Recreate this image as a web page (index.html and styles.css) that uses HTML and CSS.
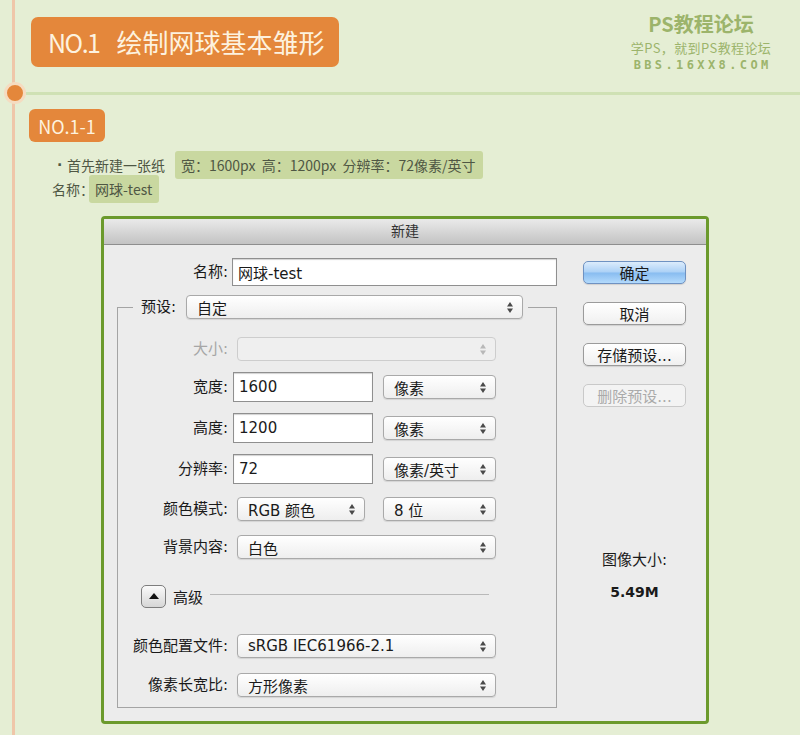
FILE: index.html
```html
<!DOCTYPE html>
<html lang="zh-CN">
<head>
<meta charset="utf-8">
<title>NO.1 绘制网球基本雏形</title>
<link rel="stylesheet" href="styles.css">
</head>
<body>
  <header class="header">
    <h1 class="title"><span class="title-no">NO.1</span><span class="title-cn">绘制网球基本雏形</span></h1>
    <div class="logo">
      <div class="logo-main">PS教程论坛</div>
      <div class="logo-sub">学PS，就到PS教程论坛</div>
      <div class="logo-url">BBS.16XX8.COM</div>
    </div>
  </header>
  <div class="divider"><span class="dot"></span><span class="rule"></span></div>
  <div class="step">NO.1-1</div>
  <p class="line line-1"><span class="bullet">·</span><span>首先新建一张纸</span><span class="hl hl-spec">宽：1600px&nbsp;&nbsp;高：1200px&nbsp;&nbsp;分辨率：72像素/英寸</span></p>
  <p class="line line-2"><span>名称：</span><span class="hl hl-name">网球-test</span></p>

  <div class="dialog">
    <div class="dlg-title">新建</div>
    <div class="dlg-body">
      <div class="dlg-main">
        <div class="row row-name"><span class="lbl">名称:</span><div class="field field-name">网球-test</div></div>
        <div class="group">
          <div class="group-head">
            <span class="seg seg-l"></span>
            <span class="lbl-preset">预设:</span>
            <div class="select select-preset"><span>自定</span><svg class="arr" width="6" height="11" viewBox="0 0 6 11"><path d="M0 4.5L3 0L6 4.5Z M0 6.5L3 11L6 6.5Z" fill="#4a4a4a"/></svg></div>
            <span class="seg seg-r"></span>
          </div>
          <div class="row r1"><span class="lbl lbl-off">大小:</span><div class="select select-wide disabled"><span></span><svg class="arr" width="6" height="11" viewBox="0 0 6 11"><path d="M0 4.5L3 0L6 4.5Z M0 6.5L3 11L6 6.5Z" fill="#b8b8b8"/></svg></div></div>
          <div class="row r2"><span class="lbl">宽度:</span><div class="field field-num">1600</div><div class="select select-unit"><span>像素</span><svg class="arr" width="6" height="11" viewBox="0 0 6 11"><path d="M0 4.5L3 0L6 4.5Z M0 6.5L3 11L6 6.5Z" fill="#4a4a4a"/></svg></div></div>
          <div class="row r3"><span class="lbl">高度:</span><div class="field field-num">1200</div><div class="select select-unit"><span>像素</span><svg class="arr" width="6" height="11" viewBox="0 0 6 11"><path d="M0 4.5L3 0L6 4.5Z M0 6.5L3 11L6 6.5Z" fill="#4a4a4a"/></svg></div></div>
          <div class="row r4"><span class="lbl">分辨率:</span><div class="field field-num">72</div><div class="select select-unit"><span>像素/英寸</span><svg class="arr" width="6" height="11" viewBox="0 0 6 11"><path d="M0 4.5L3 0L6 4.5Z M0 6.5L3 11L6 6.5Z" fill="#4a4a4a"/></svg></div></div>
          <div class="row r5"><span class="lbl">颜色模式:</span><div class="select select-mode"><span>RGB 颜色</span><svg class="arr" width="6" height="11" viewBox="0 0 6 11"><path d="M0 4.5L3 0L6 4.5Z M0 6.5L3 11L6 6.5Z" fill="#4a4a4a"/></svg></div><div class="select select-unit"><span>8 位</span><svg class="arr" width="6" height="11" viewBox="0 0 6 11"><path d="M0 4.5L3 0L6 4.5Z M0 6.5L3 11L6 6.5Z" fill="#4a4a4a"/></svg></div></div>
          <div class="row r6"><span class="lbl">背景内容:</span><div class="select select-wide"><span>白色</span><svg class="arr" width="6" height="11" viewBox="0 0 6 11"><path d="M0 4.5L3 0L6 4.5Z M0 6.5L3 11L6 6.5Z" fill="#4a4a4a"/></svg></div></div>
          <div class="row r7"><div class="toggle"><svg width="10" height="6" viewBox="0 0 10 6"><path d="M0 6L5 0L10 6Z" fill="#111"/></svg></div><span class="adv-lbl">高级</span><span class="adv-line"></span></div>
          <div class="row r8"><span class="lbl">颜色配置文件:</span><div class="select select-wide"><span>sRGB IEC61966-2.1</span><svg class="arr" width="6" height="11" viewBox="0 0 6 11"><path d="M0 4.5L3 0L6 4.5Z M0 6.5L3 11L6 6.5Z" fill="#4a4a4a"/></svg></div></div>
          <div class="row r9"><span class="lbl">像素长宽比:</span><div class="select select-wide"><span>方形像素</span><svg class="arr" width="6" height="11" viewBox="0 0 6 11"><path d="M0 4.5L3 0L6 4.5Z M0 6.5L3 11L6 6.5Z" fill="#4a4a4a"/></svg></div></div>
        </div>
      </div>
      <div class="dlg-side">
        <div class="btn btn-primary">确定</div>
        <div class="btn">取消</div>
        <div class="btn">存储预设...</div>
        <div class="btn btn-disabled">删除预设...</div>
        <div class="size-lbl">图像大小:</div>
        <div class="size-val">5.49M</div>
      </div>
    </div>
  </div>
</body>
</html>
```

FILE: styles.css
```css
* { box-sizing: border-box; }
html, body { margin: 0; padding: 0; }
body {
  width: 800px;
  height: 735px;
  overflow: hidden;
  background: linear-gradient(#efc6a9, #efc6a9) 12px 0 / 3px 100% no-repeat, #e5eed4;
  font-family: "Noto Sans CJK SC", sans-serif;
  color: #4f5744;
}

/* header */
.header {
  height: 82px;
  padding-top: 14px;
  display: flex;
  justify-content: space-between;
  align-items: flex-start;
}
.title {
  margin: 3px 0 0 31px;
  height: 50px;
  padding: 0 15px 0 17px;
  background: #e4873b;
  border-radius: 7px;
  color: #fdf2df;
  font-size: 26px;
  font-weight: 400;
  line-height: 1;
  display: flex;
  align-items: center;
}
.title-no { font-size: 25px; letter-spacing: -1.5px; margin-right: 17px; }
.logo {
  margin-right: 24px;
  width: 150px;
  text-align: center;
  color: #9cb46b;
}
.logo-main { font-size: 20px; line-height: 20px; font-weight: 700; }
.logo-sub { font-size: 13px; line-height: 28px; letter-spacing: 0.4px; }
.logo-url {
  margin-top: -4px;
  font-family: "DejaVu Sans Mono", monospace;
  font-size: 12px;
  line-height: 14px;
  letter-spacing: 3.4px;
  padding-left: 3.4px;
  font-weight: 700;
}

/* divider */
.divider { display: flex; align-items: center; height: 22px; }
.dot {
  flex: none;
  width: 22px;
  height: 22px;
  margin-left: 4px;
  border-radius: 50%;
  background: #e4873b;
  border: 3px solid #f5dcc1;
}
.rule { flex: 1; height: 3px; background: #cfe1b4; }

.step {
  margin: 5px 0 0 29px;
  width: 76px;
  height: 33px;
  border-radius: 6px;
  background: #e4873b;
  color: #fdf2df;
  font-size: 18px;
  display: flex;
  align-items: center;
  justify-content: center;
}

/* text lines */
.line {
  margin: 0;
  height: 24px;
  display: flex;
  align-items: center;
  font-size: 14px;
  white-space: nowrap;
}
.line-1 { margin-top: 11px; padding-left: 57px; }
.line-2 { padding-left: 52px; }
.bullet { flex: none; width: 10px; font-family: "DejaVu Sans", sans-serif; font-weight: 700; }
.hl {
  height: 28px;
  display: flex;
  align-items: center;
  background: #c9d8a0;
  border-radius: 3px;
  padding: 0 7px 0 6px;
}
.hl-spec { margin-left: 10px; }
.hl-name { margin-left: -5px; }

/* dialog */
.dialog {
  margin: 15px 0 0 101px;
  width: 608px;
  height: 508px;
  border: 3px solid #6b9a2c;
  border-radius: 4px;
  background: #ececec;
  display: flex;
  flex-direction: column;
  overflow: hidden;
  font-family: "DejaVu Sans", "Noto Sans CJK SC", sans-serif;
  font-size: 15px;
  color: #1a1a1a;
}
.dlg-title {
  flex: none;
  height: 26px;
  background: linear-gradient(#eaeaea, #c3c3c3);
  border-bottom: 1px solid #8e8e8e;
  text-align: center;
  line-height: 25px;
  font-size: 14px;
  color: #333;
}
.dlg-body { flex: 1; display: flex; padding-left: 13px; gap: 26px; }
.dlg-main { width: 440px; padding-top: 13px; }
.dlg-side {
  width: 103px;
  padding-top: 16px;
  display: flex;
  flex-direction: column;
  align-items: center;
}

.row { display: flex; align-items: center; height: 30px; flex: none; }
.row-name { height: 28px; }
.lbl { flex: none; width: 110px; text-align: right; line-height: 20px; }
.row-name .lbl { width: 111px; }
.lbl-off { color: #a6a6a6; }

.field {
  flex: none;
  background: #fff;
  border: 1px solid #8f8f8f;
  box-shadow: inset 0 1px 1px rgba(0,0,0,.18);
  height: 30px;
  padding-left: 5px;
  display: flex;
  align-items: center;
}
.field-name { width: 325px; height: 28px; margin-left: 4px; }
.field-num { width: 140px; margin-left: 5px; }

.group {
  margin-top: 21px;
  border: 1px solid #a4a4a4;
  border-top: 0;
  padding-bottom: 7px;
  display: flex;
  flex-direction: column;
}
.group-head { display: flex; align-items: center; height: 24px; margin-top: -12px; }
.seg { height: 1px; background: #a4a4a4; align-self: flex-start; margin-top: 12px; }
.seg-l { width: 15px; flex: none; }
.seg-r { flex: 1; margin-left: 5px; }
.lbl-preset { margin-left: 8px; line-height: 20px; }

.select {
  flex: none;
  height: 24px;
  display: flex;
  align-items: center;
  padding: 0 9px 0 10px;
  border: 1px solid #a9a9a9;
  border-radius: 4px;
  background: linear-gradient(#ffffff, #eeeeee);
  box-shadow: 0 1px 1px rgba(0,0,0,.10);
  white-space: nowrap;
}
.select .arr { margin-left: auto; flex: none; }
.select-preset { width: 337px; margin-left: 10px; }
.select-wide { width: 259px; margin-left: 9px; }
.select-unit { width: 113px; margin-left: 10px; }
.select-mode { width: 128px; margin-left: 9px; }
.select-mode + .select-unit { margin-left: 18px; }
.select.disabled { background: #efefef; border-color: #cdcdcd; box-shadow: none; }

.r1 { margin-top: 15px; }
.r2 { margin-top: 8px; }
.r3 { margin-top: 11px; }
.r4 { margin-top: 11px; }
.r5 { margin-top: 10px; }
.r6 { margin-top: 8px; }
.r7 { margin-top: 19px; }
.r8 { margin-top: 20px; }
.r9 { margin-top: 9px; }

.toggle {
  flex: none;
  margin-left: 23px;
  width: 25px;
  height: 23px;
  border: 1px solid #7d7d7d;
  border-radius: 5px;
  background: linear-gradient(#fafafa, #d6d6d6);
  display: flex;
  align-items: center;
  justify-content: center;
}
.adv-lbl { margin-left: 7px; }
.adv-line { margin-left: 7px; width: 279px; height: 1px; background: #b9b9b9; margin-top: -4px; }

.btn {
  width: 103px;
  height: 23px;
  border: 1px solid #9b9b9b;
  border-radius: 5px;
  background: linear-gradient(#ffffff, #f0f0f0);
  box-shadow: 0 1px 1px rgba(0,0,0,.12);
  display: flex;
  align-items: center;
  justify-content: center;
  font-size: 15px;
}
.btn + .btn { margin-top: 18px; }
.btn-primary {
  background: linear-gradient(#dcecfc 0%, #acd1f6 48%, #88bcf0 52%, #b3dafc 100%);
  border-color: #6f92c2;
}
.btn-disabled { color: #aaa; border-color: #c9c9c9; background: #f3f3f3; box-shadow: none; }
.size-lbl { margin-top: 143px; line-height: 20px; }
.size-val { margin-top: 12px; line-height: 20px; font-weight: 700; font-size: 14px; }
```
